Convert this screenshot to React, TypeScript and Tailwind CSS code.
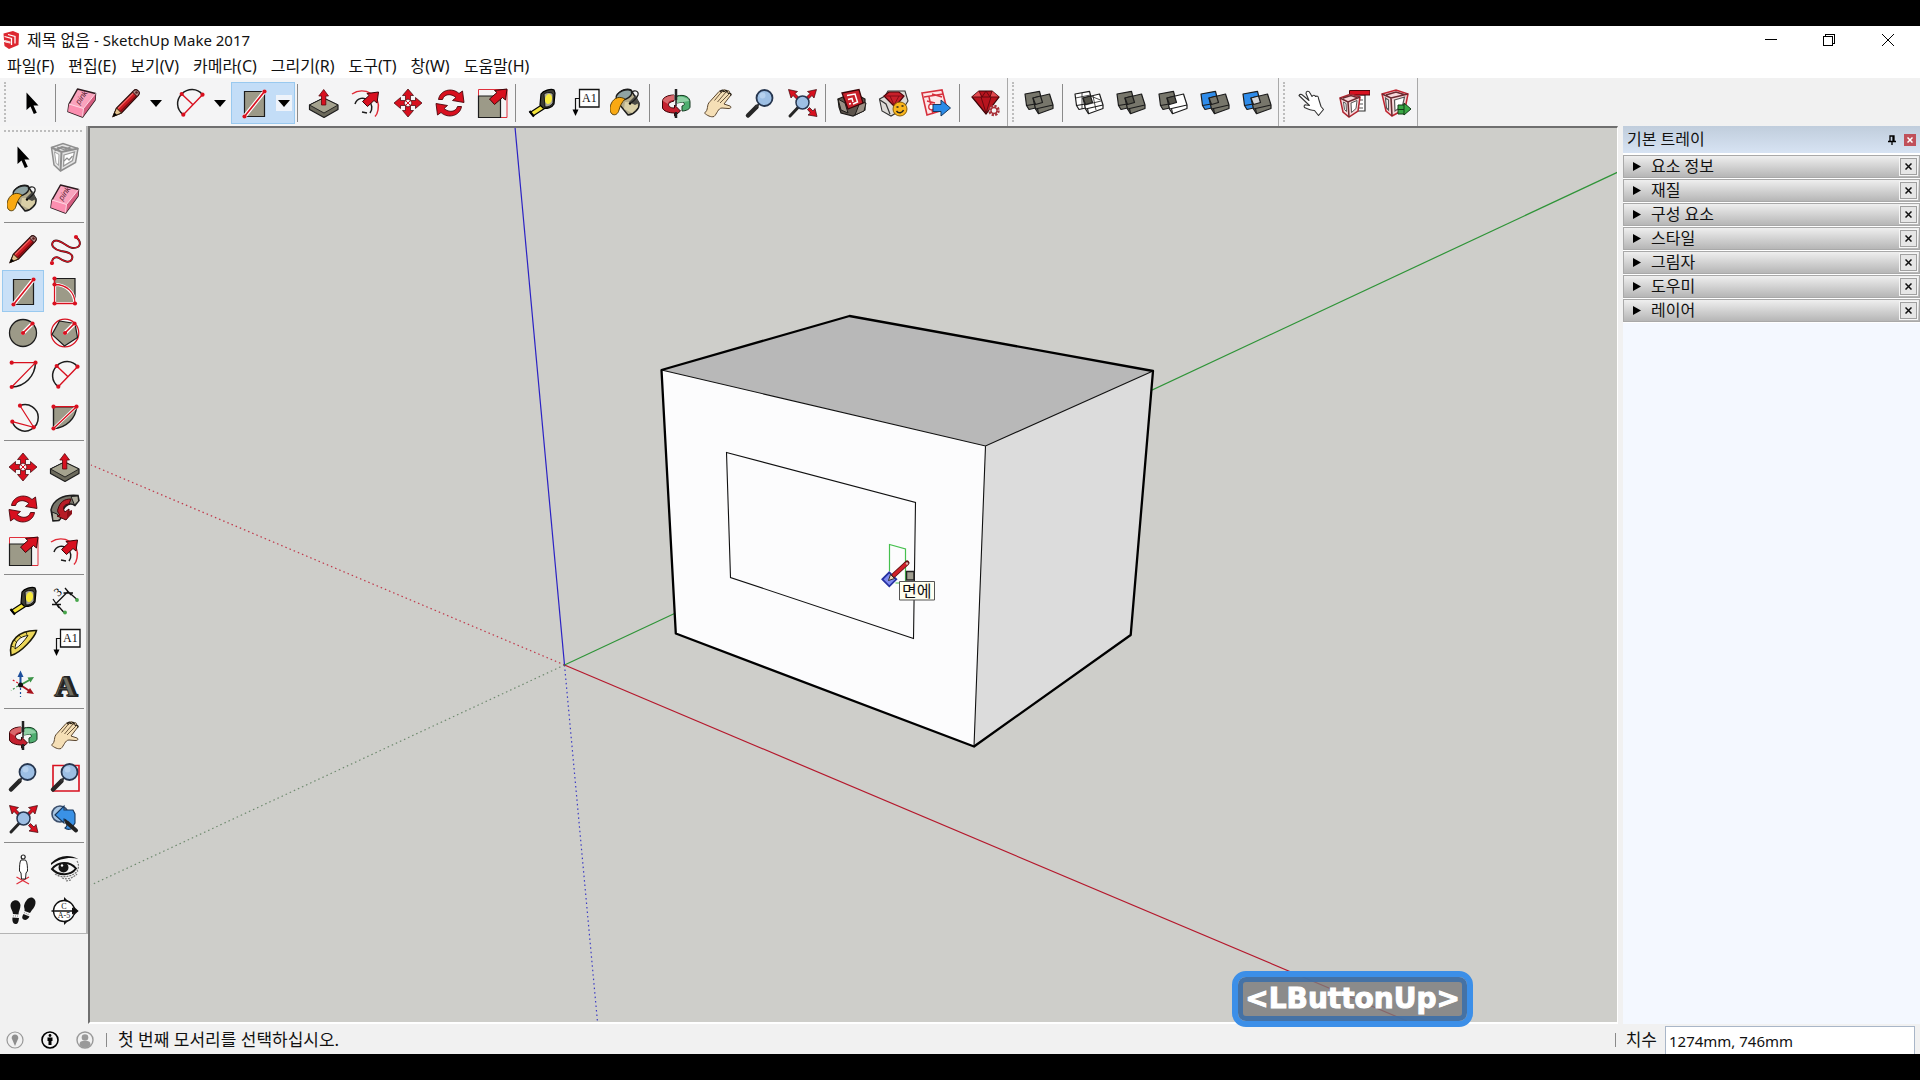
import React from "react";

type IconProps = { children: React.ReactNode };

function Svg({ children }: IconProps) {
  return (
    <svg viewBox="0 0 32 32" className="size-8 shrink-0" fill="none" aria-hidden="true">
      {children}
    </svg>
  );
}

const RED = "#d8101f";
const STONE = "#9c9a88";
const DARK = "#1c1c1c";

function Dots({ at }: { at: [number, number][] }) {
  return (
    <>
      {at.map(([x, y]) => (
        <circle key={`${x}-${y}`} cx={x} cy={y} r="2.1" fill={RED} />
      ))}
    </>
  );
}

function SelectIcon() {
  return (
    <Svg>
      <path d="M10.500 5.500V23l4-3.500 3.300 7.500 3-1.300-3.300-7.200h5z" fill="#000" />
    </Svg>
  );
}

function ComponentIcon() {
  return (
    <Svg>
      <path d="M2.500 6.500 14 2.500l15 5-2.500 14L11.500 30 5 24z" fill="#e4e4e4" stroke="#8f8f8f" strokeWidth="1.500" />
      <path d="m2.500 6.500 10 4.500L29 7.500M12.500 11l-1 19M5.500 9.500 13 6l11.500 3" stroke="#8f8f8f" strokeWidth="2" />
      <path d="m15 14 10.500-3-2 8.500L14.500 25z" fill="#fff" stroke="#9a9a9a" strokeWidth="1.300" />
      <path d="m5.500 11 4.500 2.500-.5 11L7 21.500z" fill="#fff" stroke="#a5a5a5" />
      <path d="m15 20 3-3 2 2 3.500-4M8 6l8 3 6-3.500" stroke="#8f8f8f" strokeWidth="1.200" />
    </Svg>
  );
}

function PaintIcon() {
  return (
    <Svg>
      <path d="M7 9C10 3 17 1 21 3l8 13c1 6-6 12-11 12L9 17z" fill="#b3ab8c" stroke={DARK} strokeWidth="1.500" />
      <path d="M15 15 27 16l1 4-6 6-8-4z" fill="#d9cfa6" />
      <path d="m19 15 7-7 3 8-4 2z" fill="#4a4a45" />
      <ellipse cx="14" cy="8" rx="8.500" ry="4.500" transform="rotate(-24 14 8)" fill="#8fa3a3" stroke={DARK} strokeWidth="1.500" />
      <path d="M21 6c3-4 8-2 7 2-1 4-4 5-7 8" stroke={DARK} strokeWidth="1.200" />
      <circle cx="20" cy="16.500" r="1.200" fill="#000" />
      <path d="M15 12C10 9 4 10 1 17c-2 5-1 8 1 10 3 2 6 0 7-4 1-4 3-8 6-11z" fill="#f9a913" stroke="#4b3400" strokeWidth=".9" />
    </Svg>
  );
}

function EraserIcon() {
  return (
    <Svg>
      <path d="M11.500 2 29.500 6.500 29 13 16.500 30 2 24.500 3 17z" fill="#f9a3bd" stroke="#2c1a1f" strokeWidth="1.500" strokeLinejoin="round" />
      <path d="m3 17 14.500 4.500-1 8.500L2 24.500z" fill="#fb8fb0" />
      <path d="M17.500 21.500 29.500 6.500 29 13 16.500 30z" fill="#d45d80" />
      <path d="m3 17 14.500 4.500 12-15M17.500 21.500l-1 8" stroke="#fde0e8" strokeWidth=".9" />
      <text x="13.500" y="18" transform="rotate(-56 13.500 18)" fontSize="8" fontStyle="italic" fontFamily="Liberation Sans, sans-serif" fill="#5b2336">
        pink
      </text>
    </Svg>
  );
}

function PencilIcon() {
  return (
    <Svg>
      <path d="M3 29.500 6.500 21 24 3.500c2-2 7 1 4.500 4.500L11.500 26z" fill="#c91820" stroke="#2a0c0c" strokeWidth="1.200" />
      <path d="M8 21.500 24 5.500" stroke="#f0605c" strokeWidth="1.300" />
      <path d="m10.500 24.500 17-17" stroke="#7d0c10" strokeWidth="1.500" />
      <path d="M3 29.500 6.500 21l5 5z" fill="#e2c08d" stroke="#2a1c0c" />
      <path d="m3 29.500 1.500-4 2.500 2.500z" fill="#000" />
      <path d="M24 3.500c2-2 7 1 4.500 4.500L27 9.500 22.500 5z" fill="#b48a86" stroke="#2a0c0c" />
      <circle cx="26.500" cy="5.500" r="1.300" fill="#5a1d1d" />
    </Svg>
  );
}

function FreehandIcon() {
  return (
    <Svg>
      <path d="M27 4c6 5 5 11-3 11C18 15 11 5 5 8c-5 4 1 9 7 10 7 1 13 3 11 8-2 5-9 2-13-1-3-2-6 0-7 3" stroke="#2a2020" strokeWidth="2" />
      <path d="M27 4c6 5 5 11-3 11C18 15 11 5 5 8c-5 4 1 9 7 10 7 1 13 3 11 8-2 5-9 2-13-1-3-2-6 0-7 3" stroke={RED} strokeWidth="1.200" />
      <Dots at={[[27, 4], [3, 30]]} />
    </Svg>
  );
}

function RectIcon() {
  return (
    <Svg>
      <path d="M6.500 4.500h20v25h-20z" fill={STONE} stroke={DARK} strokeWidth="1.200" />
      <path d="m6.500 29.500 20-25" stroke="#fff" strokeWidth="4" strokeLinecap="round" />
      <path d="m6.500 29.500 20-25" stroke={RED} strokeWidth="1.600" />
      <Dots at={[[6.5, 29.5], [26.5, 4.5]]} />
    </Svg>
  );
}

function RotatedRectIcon() {
  return (
    <Svg>
      <path d="M5.500 3.500h20.500v25H5.500z" fill={STONE} stroke={DARK} strokeWidth="1.200" />
      <path d="M5.500 9.500c12 0 20 8 20.500 19H5.500z" stroke="#fff" strokeWidth="3.200" />
      <path d="M5.500 3.500v25H26c0-11-8-19-20.500-19" stroke={RED} strokeWidth="1.300" />
      <Dots at={[[5.5, 3.5], [5.5, 9.5], [5.5, 28.5], [26, 28.5]]} />
    </Svg>
  );
}

function CircleIcon() {
  return (
    <Svg>
      <circle cx="16" cy="16" r="13.500" fill={STONE} stroke={DARK} strokeWidth="1.300" />
      <path d="M16 16 25.500 6.500" stroke="#fff" strokeWidth="4" strokeLinecap="round" />
      <path d="M16 16 25.500 6.500" stroke={RED} strokeWidth="1.600" />
      <Dots at={[[16, 16], [25.5, 6.5]]} />
    </Svg>
  );
}

function PolygonIcon() {
  return (
    <Svg>
      <circle cx="16" cy="16" r="13.800" stroke={RED} strokeWidth="1.200" />
      <path d="M10.500 4 26 6.500 28.500 20.500 15.500 29 3 17.500z" fill={STONE} stroke={DARK} strokeWidth="1.200" />
      <path d="M16 16 25.500 6.500" stroke="#fff" strokeWidth="4" strokeLinecap="round" />
      <path d="M16 16 25.500 6.500" stroke={RED} strokeWidth="1.600" />
      <Dots at={[[16, 16], [25.5, 6.5]]} />
    </Svg>
  );
}

function ArcIcon() {
  return (
    <Svg>
      <path d="M28.500 3.700C28 17 18 27.500 4.700 28" stroke={DARK} strokeWidth="1.500" />
      <path d="M4.700 3.700h23.800L4.700 28" stroke={RED} strokeWidth="1.200" />
      <Dots at={[[4.7, 3.7], [28.5, 3.7], [4.7, 28]]} />
    </Svg>
  );
}

function TwoPointArcIcon() {
  return (
    <Svg>
      <path d="M28.500 7.700C23 1 14 1 7.700 7 2 13 2 22 9.300 27.700" stroke={DARK} strokeWidth="1.500" />
      <path d="M28.500 7.700 9.300 27.700M7.700 7 19 17.700" stroke={RED} strokeWidth="1.400" />
      <Dots at={[[7.7, 7], [28.5, 7.7], [9.3, 27.7]]} />
    </Svg>
  );
}

function ThreePointArcIcon() {
  return (
    <Svg>
      <path d="M13 4.700C22 1 31 8 31.200 16 31.500 27 20 33 12 28.500c-3-1.500-5.500-4.500-6.700-7.800" stroke={DARK} strokeWidth="1.500" />
      <path d="m13 4.700 13.700 21.600-21.400-5.600" stroke={RED} strokeWidth="1.200" />
      <Dots at={[[13, 4.7], [5.3, 20.7], [26.7, 26.3]]} />
    </Svg>
  );
}

function PieIcon() {
  return (
    <Svg>
      <path d="M4.500 5.700h23C27 17 17 27.500 4.500 27.500z" fill={STONE} stroke={DARK} strokeWidth="1.400" />
      <path d="M4.500 27.500 27.500 5.700" stroke="#fff" strokeWidth="3" />
      <path d="M27.500 5.700h-23M4.500 27.500 27.500 5.700" stroke={RED} strokeWidth="1.300" />
      <Dots at={[[4.5, 5.7], [27.5, 5.7], [4.5, 27.5]]} />
    </Svg>
  );
}

function MoveIcon() {
  return (
    <Svg>
      {[0, 90, 180, 270].map((a) => (
        <path key={a} transform={`rotate(${a} 16 16)`} d="m16 2 5.500 6.500h-3v5l-2.500-1.500-2.500 1.500v-5h-3z" fill={RED} stroke="#3a0508" strokeWidth=".7" />
      ))}
      <path d="m13.500 13.500 5 5m0-5-5 5" stroke={RED} strokeWidth="1" />
    </Svg>
  );
}

function RotateIcon() {
  return (
    <Svg>
      {[0, 180].map((a) => (
        <path key={a} transform={`rotate(${a} 16 16)`} d="M4.500 12.500C6 3 18 0 25 6.500L28.500 4 30 15.500l-11.500-2 3.500-3C17 6 10 7 8.500 12.500z" fill={RED} stroke="#4a060b" strokeWidth=".9" />
      ))}
    </Svg>
  );
}

function PushPullIcon() {
  return (
    <Svg>
      <path d="m1.500 18 14-7 14.500 7v4.500L16 30.500 1.500 22.500z" fill="#6c6a5c" stroke={DARK} strokeWidth="1.200" strokeLinejoin="round" />
      <path d="m1.500 18 14-7 14.500 7-14 8z" fill="#a5a38f" stroke={DARK} strokeWidth=".9" />
      <path d="M15.700 2.500 20.500 9h-2.700v9h-4.300V9h-2.700z" fill={RED} stroke="#5a060b" strokeWidth=".8" />
    </Svg>
  );
}

function FollowMeIcon() {
  return (
    <Svg>
      <path d="M2 17C4 7 14 1 29 2.500l1 5-4 5c-5-3-9-1-12 4 0 4-1 8-4 11l-6 .5z" fill="#77756a" stroke={DARK} strokeWidth="1.500" />
      <path d="M22 3.500 29 3l.5 5-4 4zM3 19l5 2 4 4-3 2.500H4z" fill="#b0ae9e" stroke={DARK} />
      <path d="M9 16c2-7 6-10 13-10l-2 5c-5 0-7 4-4 8l4-3v7l-3 4-9-4 3-1c-2-2-3-4-2-6z" fill="#b81c26" stroke="#4a060b" />
      <path d="m18 19 5-2v4l-5 5z" fill="#8c1018" />
    </Svg>
  );
}

function ScaleIcon() {
  return (
    <Svg>
      <path d="M2.500 2.500H31v28H2.500z" stroke="#e0303c" strokeWidth="1" />
      <path d="M2.500 9h22v21.500h-22z" fill={STONE} stroke={DARK} strokeWidth="1.200" />
      <path d="m31 2-1.500 11-3-2.500-8 7-5-5.500L21 5.500l-2.500-2z" fill={RED} stroke="#3a0508" strokeWidth="1" />
    </Svg>
  );
}

function OffsetIcon() {
  return (
    <Svg>
      <path d="M2 7C14-1 31 8 28 23c-.5 3-1.500 5-3 6.500" stroke="#e02a36" strokeWidth="1.500" />
      <path d="M5 17c2-6 9-8 14-3 3 3 4 8 1 12M12 25l5 1" stroke={DARK} strokeWidth="1.500" />
      <path d="m28.500 5-1.500 11-3-2.500-6.500 6-5-5 6.500-6-2-2z" fill={RED} stroke="#3a0508" strokeWidth="1" />
    </Svg>
  );
}

function TapeIcon() {
  return (
    <Svg>
      <path d="M4 25.500 17 17l3 3.500L7 29z" fill="#f4e43a" stroke="#000" strokeWidth="1.200" />
      <path d="m3.500 24 4.500 5.500" stroke="#000" strokeWidth="2" />
      <path d="M15 7C17 4 25 1 28 3l1 3-1 11c-2 4-8 5-11 4l-3-3z" fill="#3c3c34" stroke="#000" strokeWidth="1.200" />
      <path d="M18 7c3-2 7-2 9 0v9c-2 3-5 4-8 4z" fill="#a9a79a" stroke="#000" strokeWidth=".8" />
      <ellipse cx="22.500" cy="12" rx="3.500" ry="5" transform="rotate(12 22.500 12)" fill="#f8ea3c" />
    </Svg>
  );
}

function DimensionIcon() {
  return (
    <Svg>
      <path d="m7 18.500 12-12M7 18.500l8 9M19 6.500l9 8M4 14l6 9m-7-3.500h9M16 3l6 7m-7.500-2H24" stroke="#111" strokeWidth="1.300" />
      <text x="7" y="12" fontSize="12" transform="rotate(-42 8 9)" fontFamily="Liberation Serif, serif" fill="#000">3</text>
      <circle cx="16" cy="27.500" r="1.900" fill="#47a64b" />
      <circle cx="28" cy="15" r="1.900" fill="#47a64b" />
    </Svg>
  );
}

function ProtractorIcon() {
  return (
    <Svg>
      <path d="M4 28.500C1 14 12 3 29.500 3.500 28 10 14 26 4 28.500z" fill="#ecd75a" stroke="#1c1a08" strokeWidth="1.500" />
      <path d="M8 22c0-8 5-12.500 13-13.500C18 13 13 19 8 22z" fill="#f4f4f4" stroke="#1c1a08" strokeWidth="1" />
      <path d="m4 19 3 1M7 13l2.500 2M12 8l2 2.500M19 5l1 3" stroke="#1c1a08" strokeWidth=".8" />
    </Svg>
  );
}

function TextIcon() {
  return (
    <Svg>
      <path d="M11.500 2.500h19.500V20H11.500z" fill="#fff" stroke="#111" strokeWidth="1.300" />
      <path d="M11 11.500H7.500V24" stroke="#111" strokeWidth="1.200" />
      <path d="M4.500 22.500h6l-3 6.500z" fill="#000" />
      <text x="14" y="15" fontSize="12" fontFamily="Liberation Serif, serif" fill="#111">A1</text>
    </Svg>
  );
}

function AxesIcon() {
  return (
    <Svg>
      <path d="M13.500 16V7" stroke="#1d4f9c" strokeWidth="2" />
      <path d="m13.500 1.500 3 6.500h-6z" fill="#1d4f9c" />
      <path d="m13.500 16 9-5" stroke="#3c9448" strokeWidth="2" />
      <path d="m27 8-3.500 5.500-3-5z" fill="#3c9448" />
      <path d="m13.500 16 9 6" stroke="#a8121c" strokeWidth="2" />
      <path d="m27 25-7.500-1 3.500-5z" fill="#a8121c" />
      <path d="M13.500 19v9" stroke="#1d4f9c" strokeWidth="1.200" strokeDasharray="2 2" />
      <path d="m11 17-7 4.500" stroke="#3c9448" strokeWidth="1.200" strokeDasharray="2 2" />
      <path d="m11 14-7-4" stroke="#d8101f" strokeWidth="1.200" strokeDasharray="2 2" />
      <circle cx="13.500" cy="16" r="2.500" fill="#111" />
    </Svg>
  );
}

function Text3dIcon() {
  return (
    <Svg>
      <g fontFamily="Liberation Serif, serif" fontWeight="700" fontSize="30">
        <text x="7" y="27" fill="#222" stroke="#222" strokeWidth="2">A</text>
        <text x="5" y="27" fill="#6f6e62" stroke="#222" strokeWidth=".8">A</text>
      </g>
    </Svg>
  );
}

function OrbitIcon() {
  return (
    <Svg>
      <path d="M17 9c7-2 13 1 13 6v5c0 2-4 4-8 4v-5c3-1 3-2 1-4l-6 1z" fill="#4fae70" stroke="#173a22" strokeWidth="1" />
      <path d="M17 10c6-1 11 1 12 4l-6 1-6 1z" fill="#8fd0a4" />
      <path d="M14 8C7 8 2 11 2.500 15v6c1 3 6 5 12 5v3l6-5-6-6v3c-5 0-6-2-6-4 0-1 2-2 5.500-3z" fill="#c4202e" stroke="#3a0508" strokeWidth="1" />
      <path d="M3 14c0-3 5-5 11-6v5c-4 0-6 2-6 4z" fill="#d9686c" />
      <path d="M16 2v11M16 25v6" stroke="#222" strokeWidth="2.500" />
      <path d="M16 13v6" stroke="#222" strokeWidth="1.500" />
    </Svg>
  );
}

function PanIcon() {
  return (
    <Svg>
      <path d="M2.500 26C7 23 4 18 8 14.500L17 4.500c2-2 3 0 2 1.500l2-2.500c2-2 4 0 2.500 2L25 4c2-1 3 .5 2 2l-.5 1c2-1.500 3 0 2 1.500L22 17l6 2c2 1 .5 3-2 2.500l-6-.5c-4 0-5 6-8 8.500-3 1-7-1-9.500-3.500z" fill="#f5dfb6" stroke="#5a4630" strokeWidth="1" />
      <path d="m12.500 13.500 7-8.500M15.500 15 24 5M18 16l8.500-8.500" stroke="#5a4630" strokeWidth=".9" />
      <path d="M18 5c2-3 4-2 3 0m1 0c2-3 4-1 3 1m1 1c2-2 4 0 2.500 2" stroke="#2a2218" strokeWidth="1.200" />
    </Svg>
  );
}

function Lens() {
  return (
    <>
      <path d="M4 28.500 12.500 20" stroke="#262626" strokeWidth="4.500" strokeLinecap="round" />
      <path d="m11.500 20.500 4-4" stroke="#333" strokeWidth="2" />
      <circle cx="20.500" cy="11" r="8" fill="#9dbfe4" stroke="#26364f" strokeWidth="1.800" />
      <circle cx="18.500" cy="8.500" r="3" fill="#b6d1ee" />
    </>
  );
}

function ZoomIcon() {
  return (
    <Svg>
      <Lens />
    </Svg>
  );
}

function ZoomWindowIcon() {
  return (
    <Svg>
      <path d="M4 4.500h26V30H4z" stroke={RED} strokeWidth="1.600" />
      <Lens />
    </Svg>
  );
}

function ZoomExtentsIcon() {
  return (
    <Svg>
      <path d="m4 29 8-8.500" stroke="#262626" strokeWidth="3" strokeLinecap="round" />
      <path d="m2.500 2.500 9 2-2.500 2 4 4-2 2-4-4-2 2.500zM30.500 2.500l-9 2 2.500 2-4 4 2 2 4-4 2 2.500zM31 29.500l-9-1.500 2.500-2-3-3.500 2-2 3.500 3.500 2-2.500z" fill={RED} stroke="#3a0508" strokeWidth=".7" />
      <circle cx="16.500" cy="15.500" r="6.500" fill="#9dbfe4" stroke="#26364f" strokeWidth="1.500" />
    </Svg>
  );
}

function ZoomPreviousIcon() {
  return (
    <Svg>
      <circle cx="11" cy="11" r="8" fill="#a9c6e2" stroke="#3c4f6c" strokeWidth="1.600" />
      <path d="m6 12 9-9v4h9l2 4v9l-4 6c-4 1-5 0-6-1 3-2 3-8-1-9v4z" fill="#3a92e6" stroke="#17375c" strokeWidth="1.100" />
      <path d="m18 19.500 9 8" stroke="#222" strokeWidth="4" strokeLinecap="round" />
      <path d="m16 17 3 3" stroke="#222" strokeWidth="2" />
    </Svg>
  );
}

function PositionCameraIcon() {
  return (
    <Svg>
      <path d="M9.500 31 22 24m-12.500 0L22 31" stroke="#e0303c" strokeWidth="1.300" />
      <circle cx="16.200" cy="4" r="2" fill="#fff" stroke="#222" strokeWidth="1.200" />
      <path d="M14 7h4.500c2 2 2 8 2 11l-1.500 2-.5 6h-4l-.5-6-1.500-2c0-4 0-9 1.500-11z" fill="#fff" stroke="#222" strokeWidth="1" />
    </Svg>
  );
}

function LookAroundIcon() {
  return (
    <Svg>
      <path d="M2 10C10 2 20 1 29.500 6 21 4 11 5 2 12z" fill="#111" />
      <path d="M3 16c6-8 18-8 24-.5-5 7-17 8-24 .5z" fill="#f4f4f4" stroke="#111" strokeWidth="2" />
      <circle cx="14.500" cy="14.500" r="5" fill="#151515" />
      <circle cx="13" cy="12.500" r="1.200" fill="#fff" />
      <path d="M6 21c6 4 15 4 23-3M13 25c5 2 11 0 15-4M28 8c2 3 2 7 0 10M17 28l5-1" stroke="#777" strokeWidth="1.200" strokeDasharray="2 1" />
    </Svg>
  );
}

function WalkIcon() {
  return (
    <Svg>
      <path d="M3.500 11c0-7 9-8 10-1 0 4-2 6-2 9.500L6 19C6 16 3.500 14 3.500 11zM5.500 22.500l6.500.5c-.5 4-1 6-3.500 6S5 26 5.500 22.500z" fill="#151515" />
      <path d="M17 11c1-5 5-10 9-8 4 2 3 8-1 12l-2 3-5.500-2C18 14 17 13 17 11zM16.500 19l6 2.500c-1.500 3-4 4-6 3s-1.500-3 0-5.500z" fill="#151515" />
      <path d="m6 20.800 5.500.4M17 17.500l5.500 2.500" stroke="#999" strokeWidth="1.300" strokeDasharray="1 1" />
    </Svg>
  );
}

function SectionIcon() {
  return (
    <Svg>
      <path d="m15 2 14.500 14L15 30z" fill="#151515" />
      <circle cx="15" cy="16" r="10.500" fill="#fff" stroke="#111" strokeWidth="1.300" />
      <path d="M2.500 16H25" stroke="#111" strokeWidth="1.500" />
      <path d="m23 12.500 6.500 3.500-6.500 3.500z" fill="#111" />
      <text x="15" y="14" textAnchor="middle" fontSize="8" fontFamily="Liberation Serif, serif" fill="#111">C</text>
      <text x="15" y="23" textAnchor="middle" fontSize="8" fontFamily="Liberation Serif, serif" fill="#111">A-5</text>
    </Svg>
  );
}

function WarehouseIcon() {
  return (
    <Svg>
      <path d="m2 12 5-2 3 4 15-4 4 2v11l-12 6-12-3-2-6z" fill="#5c544c" stroke="#1c1a18" strokeWidth="1.200" />
      <path d="m2 12 7 4 3 10-7-3zM24 15l6 1-2 8-9 4z" fill="#9a9186" stroke="#1c1a18" />
      <path d="m6 6 17-3.500L27 16l-15 6z" fill="#c8202a" stroke="#3a0508" strokeWidth="1.300" />
      <path d="m11 8.500 8-1.500 2.500 8L17 17M12 12.500l4-1 1 3.500M13 17l2-.5" stroke="#fff" strokeWidth="1.500" />
    </Svg>
  );
}

function ExtensionWarehouseIcon() {
  return (
    <Svg>
      <path d="M1.500 12 7 9l3-5h17l3 10-5 8-12 7-9-5z" fill="#dddad6" stroke="#333" strokeWidth="1.100" />
      <path d="m2 13 6 4 4 10" stroke="#333" strokeWidth="1.200" />
      <path d="m6 9 5-4h10l5 4-9 11z" fill="#c8202a" stroke="#4a060b" strokeWidth="1.200" />
      <path d="M6 9h20M12 9l4 9 5-9" stroke="#7c0c14" strokeWidth=".9" />
      <circle cx="22" cy="22" r="7" fill="#f9b51c" stroke="#7a5200" strokeWidth=".9" />
      <path d="M18.500 20h2m3-1h2M18.500 24c2 3 6 2 7-1" stroke="#222" strokeWidth="1.400" />
    </Svg>
  );
}

function LayoutIcon() {
  return (
    <Svg>
      <path d="m2 6 20-3 5 19-20 6z" fill="#fde7e8" stroke="#d6303c" strokeWidth="1.600" />
      <path d="m4 10 19-3M9 10l4 17M7 14l8 2M12 7l10 3" stroke="#d6303c" strokeWidth="1.500" />
      <circle cx="11.500" cy="20" r="2.800" fill="#fff" stroke="#d6303c" strokeWidth="1.300" />
      <path d="M13 17.500h8V13l9.500 8-9.500 8v-4.500h-8z" fill="#2a8be8" stroke="#17375c" strokeWidth="1" />
    </Svg>
  );
}

function ExtensionManagerIcon() {
  return (
    <Svg>
      <path d="m2 10 7-6h13l7 6-13 17z" fill="#b8141e" stroke="#3a0508" strokeWidth="1.200" />
      <path d="m2 10 7-6 2 6zM22 4l7 6h-9z" fill="#e24a50" />
      <path d="M2 10h27M11 10l5 16 5-16M9 4l3 6 4-6 4 6 2-6" stroke="#5c080f" strokeWidth=".9" />
      <circle cx="24" cy="23.500" r="4.500" fill="#f4f4f4" stroke="#a83038" strokeWidth="2.500" strokeDasharray="2.200 1.300" />
      <circle cx="24" cy="23.500" r="3" stroke="#a83038" strokeWidth="1.300" />
    </Svg>
  );
}

type SolidProps = { a: string; b: string; mid: string; edges?: boolean };

function SolidIcon({ a, b, mid, edges }: SolidProps) {
  return (
    <Svg>
      <g stroke={DARK} strokeWidth="1.200" strokeLinejoin="round">
        <path d="m2 7 14.500-2.700L19.500 16 17 20 6 22.500 3.500 18.500z" fill={a} />
        <path d="m3.500 18.500 9-1.500" />
        <path d="m10 11 16.500-4L30 18v3.500l-14.500 5.200L12.500 22z" fill={b} />
        <path d="m12.500 22 17.500-4M14.500 21.500l1 5" />
        <path d="m10 11 7.500-2 2 6.500-7 2z" fill={mid} />
        {edges && <path d="m2.500 11 15-3M9 6v16M20 9l3 14M12 18l16-4M17.500 9l10 4" strokeWidth=".8" />}
      </g>
    </Svg>
  );
}

function PointHandIcon() {
  return (
    <Svg>
      <path d="M3 8.500c1-2 3-1 4 0l6 5-3-7c0-3 3-3 4-.5l2 3.500c1-2 3-1.500 3.500 0 2-1 3 0 3 2l2.500 8 2.500 3-5 6-4-5c-4 0-8-2-10-3-1-2 0-3 2-2.500l3 .5z" fill="#fff" stroke="#333" strokeWidth="1.100" strokeLinejoin="round" />
    </Svg>
  );
}

function RedBox() {
  return (
    <>
      <path d="m2 11 11-4 9 3-2 14-9 6-6-5z" fill="#f6d9db" stroke="#b02530" strokeWidth="1.500" />
      <path d="m2 11 8 4 12-5M10 15l1 15M5 11l8-2.500 6 2" stroke="#6b2a30" strokeWidth="1.500" />
      <path d="m13 16 6-2.500-1 8-4.500 4zM5.500 15l2.500 1.500.5 8-2-2z" fill="#fff" stroke="#555" />
    </>
  );
}

function ComponentMenuIcon() {
  return (
    <Svg>
      <path d="M16 8h11v16H16z" fill="#fff" stroke="#333" strokeWidth="1.200" />
      <path d="M20 13h5m-5 4h5m-5 4h5" stroke="#555" strokeWidth="1.200" />
      <path d="M11.500 3.500H32V8H11.500z" fill="#d8101f" stroke="#4a060b" />
      <RedBox />
    </Svg>
  );
}

function ComponentGoIcon() {
  return (
    <Svg>
      <path d="m2 7 14-4 12 4-3 15-13 7-6-5z" fill="#f6d9db" stroke="#c02530" strokeWidth="1.500" />
      <path d="m2 7 9 4 17-4M11 11l1 18M6 8l10-3 8 2.500" stroke="#6b2a30" strokeWidth="1.600" />
      <path d="m14.500 13 10-3-2 9-7.500 5zM5.500 11l3 2v10l-2-2z" fill="#fff" stroke="#555" strokeWidth="1.200" />
      <path d="M18 18h6v-2l7 6-7 6v-1h-6z" fill="#3aa845" stroke="#143c18" strokeWidth="1" />
      <path d="M18 22.500h6M24 17v11" stroke="#143c18" />
    </Svg>
  );
}

function LogoIcon() {
  return (
    <svg viewBox="0 0 18 20" className="h-5 w-[18px]" aria-hidden="true">
      <path d="M.5 3.500 10 1l6 2.500L15.500 15 6 19l-4.500-3L1 12l6 1.500L1 10z" fill="#dd2730" />
      <path d="m1.500 6.500 7 2V15M5 4.500l7 2v7" fill="none" stroke="#fff" strokeWidth="1.300" />
      <path d="m2 10 5.500 1.500v2L2 12z" fill="#fbdcdd" />
    </svg>
  );
}

function Caret() {
  return (
    <svg viewBox="0 0 12 7" className="h-[7px] w-3 shrink-0" aria-hidden="true">
      <path d="M0 0h12L6 7z" fill="#000" />
    </svg>
  );
}

type Tool = { label: string; icon: React.ReactNode; active?: boolean };

function ToolButton({ label, icon, active }: Tool) {
  return (
    <button
      aria-label={label}
      className={
        active
          ? "flex h-[42px] w-[42px] shrink-0 items-center justify-center border border-[#99c9ef] bg-[#c9e0f7]"
          : "flex h-[42px] w-[42px] shrink-0 items-center justify-center"
      }
    >
      {icon}
    </button>
  );
}

function SplitTool({ label, icon, active }: Tool) {
  return (
    <div className={active ? "flex h-[42px] w-16 bg-[#c3ddf7] outline outline-1 -outline-offset-1 outline-[#99c9ef]" : "flex h-[42px] w-16"}>
      <button aria-label={label} className="flex w-[45px] items-center justify-center">
        {icon}
      </button>
      <button aria-label={`${label} 메뉴`} className="flex w-4 items-center justify-center self-center">
        <span className={active ? "flex h-4 w-4 shrink-0 items-center justify-center bg-[#eef3fa]" : "flex"}>
          <Caret />
        </span>
      </button>
    </div>
  );
}

function VSep() {
  return (
    <div className="flex w-2 shrink-0 pl-0.5">
      <div className="h-[38px] w-px bg-[#8a8a8a]" />
    </div>
  );
}

function Grip() {
  return <div className="h-10 w-0 border-l-2 border-dotted border-[#bdbdbd]" />;
}

const viewTools: Tool[][] = [
  [
    { label: "밀기/끌기", icon: <PushPullIcon /> },
    { label: "오프셋", icon: <OffsetIcon /> },
    { label: "이동", icon: <MoveIcon /> },
    { label: "회전", icon: <RotateIcon /> },
    { label: "배율", icon: <ScaleIcon /> },
  ],
  [
    { label: "줄자", icon: <TapeIcon /> },
    { label: "텍스트", icon: <TextIcon /> },
    { label: "페인트통", icon: <PaintIcon /> },
  ],
  [
    { label: "궤도", icon: <OrbitIcon /> },
    { label: "이동 보기", icon: <PanIcon /> },
    { label: "확대/축소", icon: <ZoomIcon /> },
    { label: "범위 확대", icon: <ZoomExtentsIcon /> },
  ],
  [
    { label: "3D Warehouse", icon: <WarehouseIcon /> },
    { label: "Extension Warehouse", icon: <ExtensionWarehouseIcon /> },
    { label: "LayOut", icon: <LayoutIcon /> },
  ],
  [{ label: "확장 관리자", icon: <ExtensionManagerIcon /> }],
];

const GREY = "#77766b";
const BLUE = "#2f8cea";

function TopToolbar() {
  return (
    <div className="flex h-12 shrink-0 bg-[#f1f1f1]">
      <div className="flex h-full items-center border-r border-[#a9a9a9] bg-[#f4f4f5] pl-1">
        <Grip />
        <div className="flex items-center pt-0.5 pl-[5px]">
          <ToolButton label="선택" icon={<SelectIcon />} />
          <VSep />
          <ToolButton label="지우개" icon={<EraserIcon />} />
          <SplitTool label="선" icon={<PencilIcon />} />
          <SplitTool label="호" icon={<TwoPointArcIcon />} />
          <SplitTool label="직사각형" icon={<RectIcon />} active />
          {viewTools.map((group, i) => (
            <React.Fragment key={i}>
              <VSep />
              {group.map((t) => (
                <ToolButton key={t.label} {...t} />
              ))}
            </React.Fragment>
          ))}
        </div>
      </div>
      <div className="flex h-full items-center border-r border-[#a9a9a9] bg-[#f4f4f5] pl-1">
        <Grip />
        <div className="flex items-center pt-0.5 pl-1">
          <ToolButton label="외부 쉘" icon={<SolidIcon a={GREY} b={GREY} mid={GREY} />} />
          <VSep />
          <ToolButton label="교차" icon={<SolidIcon a="#fff" b="#fff" mid="#55544b" edges />} />
          <ToolButton label="결합" icon={<SolidIcon a={GREY} b={GREY} mid="#5a594f" />} />
          <ToolButton label="빼기" icon={<SolidIcon a={GREY} b="#fff" mid="#55544b" />} />
          <ToolButton label="자르기" icon={<SolidIcon a={BLUE} b={GREY} mid={GREY} />} />
          <ToolButton label="분할" icon={<SolidIcon a={BLUE} b={GREY} mid="#d5d5d5" />} />
        </div>
      </div>
      <div className="flex h-full items-center border-r border-[#a9a9a9] bg-[#f4f4f5] pl-1">
        <Grip />
        <div className="flex items-center pt-0.5 pl-1.5">
          <ToolButton label="상호 작용" icon={<PointHandIcon />} />
          <ToolButton label="구성 요소 옵션" icon={<ComponentMenuIcon />} />
          <ToolButton label="구성 요소 특성" icon={<ComponentGoIcon />} />
        </div>
      </div>
    </div>
  );
}

const toolSet: Tool[][] = [
  [
    { label: "선택", icon: <SelectIcon /> },
    { label: "구성 요소 만들기", icon: <ComponentIcon /> },
    { label: "페인트통", icon: <PaintIcon /> },
    { label: "지우개", icon: <EraserIcon /> },
  ],
  [
    { label: "선", icon: <PencilIcon /> },
    { label: "자유형", icon: <FreehandIcon /> },
    { label: "직사각형", icon: <RectIcon />, active: true },
    { label: "회전된 직사각형", icon: <RotatedRectIcon /> },
    { label: "원", icon: <CircleIcon /> },
    { label: "다각형", icon: <PolygonIcon /> },
    { label: "호", icon: <ArcIcon /> },
    { label: "2점 호", icon: <TwoPointArcIcon /> },
    { label: "3점 호", icon: <ThreePointArcIcon /> },
    { label: "파이", icon: <PieIcon /> },
  ],
  [
    { label: "이동", icon: <MoveIcon /> },
    { label: "밀기/끌기", icon: <PushPullIcon /> },
    { label: "회전", icon: <RotateIcon /> },
    { label: "따라가기", icon: <FollowMeIcon /> },
    { label: "배율", icon: <ScaleIcon /> },
    { label: "오프셋", icon: <OffsetIcon /> },
  ],
  [
    { label: "줄자", icon: <TapeIcon /> },
    { label: "치수", icon: <DimensionIcon /> },
    { label: "각도기", icon: <ProtractorIcon /> },
    { label: "텍스트", icon: <TextIcon /> },
    { label: "축", icon: <AxesIcon /> },
    { label: "3D 텍스트", icon: <Text3dIcon /> },
  ],
  [
    { label: "궤도", icon: <OrbitIcon /> },
    { label: "이동 보기", icon: <PanIcon /> },
    { label: "확대/축소", icon: <ZoomIcon /> },
    { label: "창 확대/축소", icon: <ZoomWindowIcon /> },
    { label: "범위 확대", icon: <ZoomExtentsIcon /> },
    { label: "이전", icon: <ZoomPreviousIcon /> },
  ],
  [
    { label: "카메라 배치", icon: <PositionCameraIcon /> },
    { label: "둘러보기", icon: <LookAroundIcon /> },
    { label: "걷기", icon: <WalkIcon /> },
    { label: "단면", icon: <SectionIcon /> },
  ],
];

function LeftToolbar() {
  return (
    <div className="flex w-[88px] shrink-0 flex-col items-start bg-[#f1f1f1]">
      <div className="w-[88px] border-r-2 border-b border-[#b4b4b4] bg-[#f5f5f5] pt-1">
        <div className="mr-1 ml-1 h-0 border-t-2 border-dotted border-[#bdbdbd]" />
        <div className="flex flex-col pt-1 pb-px pl-0.5">
          {toolSet.map((group, i) => (
            <React.Fragment key={i}>
              {i > 0 && (
                <div className="h-2 pt-0.5">
                  <div className="mr-0.5 ml-0.5 h-px bg-[#8a8a8a]" />
                </div>
              )}
              <div className="grid grid-cols-[42px_42px]">
                {group.map((t) => (
                  <ToolButton key={t.label} {...t} />
                ))}
              </div>
            </React.Fragment>
          ))}
        </div>
      </div>
    </div>
  );
}

function Model() {
  return (
    <svg viewBox="90 128 1527 894" preserveAspectRatio="xMidYMid slice" className="absolute inset-0 h-full w-full" role="img" aria-label="3D 모델">
      <g fill="none" strokeWidth="1.200">
        <path d="M564.500 665 91 465" stroke="#c03a4c" strokeDasharray="1.500 3" />
        <path d="M564.500 665 91 885" stroke="#6f8a6f" strokeDasharray="1.500 3" />
        <path d="m564.500 665 33 357" stroke="#3c3cc4" strokeDasharray="1.500 3" />
        <path d="M564.500 665 515 127" stroke="#2b22c4" />
        <path d="M564.500 665 1407 1021" stroke="#b5182c" />
        <path d="M564.500 665 1618 172" stroke="#2f9438" />
      </g>
      <path d="M661.500 370 849.500 316 1153 371 985.500 446z" fill="#b8b8b8" />
      <path d="M661.500 370 985.500 446 974 746.500 675.800 633.500z" fill="#fcfcfd" />
      <path d="M985.500 446 1153 371 1130.700 635 974 746.500z" fill="#dcdcdc" />
      <path d="M661.500 370 985.500 446 1153 371M985.500 446 974 746.500M726.500 452.500l189 50-2 136-183-61z" fill="none" stroke="#111" strokeWidth="1.100" />
      <path d="M661.500 370 849.500 316 1153 371 1130.700 635 974 746.500 675.800 633.500z" fill="none" stroke="#000" strokeWidth="2.300" strokeLinejoin="round" />
      <path d="M889.500 571v-26.500l16 4.500v34l-10 0" fill="none" stroke="#45c04e" strokeWidth="1.200" />
      <path d="M906.500 571.500h7.500v8.500h-7.500z" fill="#a09e90" stroke="#222" strokeWidth="1.500" />
      <path d="m889.300 572.300 7 7-7 7-7-7z" fill="#7f8aee" stroke="#2530a0" strokeWidth="1.800" />
      <path d="m894 575 13-12" stroke="#5c1212" strokeWidth="5" strokeLinecap="round" />
      <path d="m894 575 12-11" stroke="#d0202a" strokeWidth="3.200" strokeLinecap="round" />
      <path d="m888.500 580.500 2-6 4 4z" fill="#ecd6bb" stroke="#222" strokeWidth=".9" />
      <circle cx="907" cy="563.500" r="1.200" fill="#e0b5b0" />
      <path d="M899.500 581.500h35v18.500h-35z" fill="#fffff0" stroke="#555" strokeWidth="1" />
      <text x="902" y="597" fontSize="16" fontFamily="'Noto Sans CJK KR', sans-serif" fill="#111">면에</text>
    </svg>
  );
}

function Viewport() {
  return (
    <main className="relative min-w-0 flex-1 border-t-2 border-r border-b-2 border-l-2 border-t-[#6f6f6f] border-r-white border-b-white border-l-[#6f6f6f] bg-[#cececa]">
      <Model />
      <div className="absolute right-36 -bottom-[5px] z-10 rounded-[14px] border-[6px] border-[#3c8fe8]">
        <div
          className="flex h-11 items-center rounded-lg border-[5px] border-[#3e70a8]/90 bg-[#7a7a7a]/80 px-0.5 text-[28px] leading-8 font-bold text-white [-webkit-text-stroke:1px_white]"
          style={{ fontFamily: "'DejaVu Sans', sans-serif" }}
        >
          &lt;LButtonUp&gt;
        </div>
      </div>
    </main>
  );
}

const sections = ["요소 정보", "재질", "구성 요소", "스타일", "그림자", "도우미", "레이어"];

function Tray() {
  return (
    <aside className="ml-[5px] flex w-[297px] shrink-0 flex-col bg-[#f4f8ff] text-[16px]">
      <div className="flex h-[27px] items-center bg-gradient-to-b from-[#c0cddc] to-[#d7e3f3] pr-1 pl-1">
        <h2 className="flex-1 pb-0.5">기본 트레이</h2>
        <button aria-label="자동 숨기기" className="mr-2">
          <svg viewBox="0 0 8 10" className="h-2.5 w-2" fill="none" stroke="#000" strokeWidth="1.300">
            <path d="M2 6V1h4v5M0 6.500h8M4 6.500V10M5 1v5" />
          </svg>
        </button>
        <button aria-label="트레이 닫기" className="flex size-3 items-center justify-center bg-[#c0505a]">
          <svg viewBox="0 0 6 6" className="size-1.5" stroke="#fff" strokeWidth="1.500">
            <path d="m.5.500 5 5m0-5-5 5" />
          </svg>
        </button>
      </div>
      <div className="flex flex-col gap-px border-b border-white bg-white pt-0.5">
        {sections.map((s) => (
          <div key={s} className="flex h-[23px] items-center border border-[#a9a9a9] bg-gradient-to-b from-[#efefef] to-[#b6b6b6] pr-0.5 pl-[9px]">
            <button className="flex h-full flex-1 items-center gap-2.5 text-left">
              <svg viewBox="0 0 8 9" className="h-[9px] w-2" aria-hidden="true">
                <path d="M0 0v9l8-4.500z" fill="#000" />
              </svg>
              <span className="pb-0.5">{s}</span>
            </button>
            <button aria-label={`${s} 닫기`} className="flex size-[17px] items-center justify-center border border-[#a0a0a0] bg-[#e6e6e6] outline outline-1 outline-[#f6f6f6]">
              <svg viewBox="0 0 7 7" className="size-[7px]" stroke="#111" strokeWidth="1.500">
                <path d="m.5.500 6 6m0-6-6 6" />
              </svg>
            </button>
          </div>
        ))}
      </div>
    </aside>
  );
}

const menus = ["파일(F)", "편집(E)", "보기(V)", "카메라(C)", "그리기(R)", "도구(T)", "창(W)", "도움말(H)"];

function TitleBar() {
  return (
    <header className="shrink-0 bg-white">
      <div className="flex h-7 items-center pl-[3px]">
        <LogoIcon />
        <h1 className="flex-1 pl-1.5 text-[15px]">
          <span className="text-[16px]">제목 없음</span> - SketchUp Make 2017
        </h1>
        <div className="flex">
          <button aria-label="최소화" className="flex h-7 w-[58px] items-center justify-center">
            <svg viewBox="0 0 12 12" className="size-3" stroke="#000" shapeRendering="crispEdges">
              <path d="M0 5.500h12" />
            </svg>
          </button>
          <button aria-label="이전 크기로 복원" className="flex h-7 w-[58px] items-center justify-center">
            <svg viewBox="0 0 12 12" className="size-3" fill="none" stroke="#000" shapeRendering="crispEdges">
              <path d="M.5 2.500h9v9h-9zM2.500 2.500v-2h9v9h-2" />
            </svg>
          </button>
          <button aria-label="닫기" className="mr-0.5 flex h-7 w-[60px] items-center justify-center">
            <svg viewBox="0 0 12 12" className="size-3" stroke="#000">
              <path d="m0 0 12 12M12 0 0 12" />
            </svg>
          </button>
        </div>
      </div>
      <nav className="flex h-6 items-center gap-3.5 pl-[7px] text-[16px]">
        {menus.map((m) => (
          <button key={m}>{m}</button>
        ))}
      </nav>
    </header>
  );
}

function StatusBar() {
  return (
    <footer className="flex h-[30px] shrink-0 items-center bg-[#f1f1f1] pt-0.5 text-[17px]">
      <div className="flex items-center gap-[17px] pl-1.5">
        <button aria-label="지리적 위치">
          <svg viewBox="0 0 18 18" className="size-[18px]" fill="none">
            <circle cx="9" cy="9" r="8" stroke="#999" strokeWidth="1.200" />
            <path d="M9 15 5.800 7.500a3.300 3.300 0 1 1 6.400 0z" fill="#8e8e8e" />
          </svg>
        </button>
        <button aria-label="크레딧">
          <svg viewBox="0 0 18 18" className="size-[18px]" fill="none">
            <circle cx="9" cy="9" r="8" stroke="#000" strokeWidth="1.600" />
            <circle cx="9" cy="4.500" r="1.400" fill="#000" />
            <path d="M6.500 6.500h5v3.500h-1v4h-3v-4h-1z" fill="#000" />
          </svg>
        </button>
        <button aria-label="로그인">
          <svg viewBox="0 0 18 18" className="size-[18px]" fill="none">
            <circle cx="9" cy="9" r="8" stroke="#999" strokeWidth="1.400" />
            <circle cx="9" cy="6.500" r="3.300" fill="#999" />
            <path d="M3.500 14c0-4 2-4 5.500-4s5.500 0 5.500 4c-3 3.500-8 3.500-11 0z" fill="#999" />
          </svg>
        </button>
      </div>
      <div className="mr-[11px] ml-3 h-3.5 w-px bg-[#8a8a8a]" />
      <p className="flex-1">첫 번째 모서리를 선택하십시오.</p>
      <div className="mr-2.5 h-3.5 w-px bg-[#8a8a8a]" />
      <label htmlFor="measure" className="mr-2">
        치수
      </label>
      <input
        id="measure"
        defaultValue="1274mm, 746mm"
        className="mr-[5px] h-7 w-[250px] border border-b-0 border-[#a9b6c8] bg-white px-[3px] text-[15px] outline-none"
      />
    </footer>
  );
}

export default function App() {
  return (
    <div className="flex h-screen flex-col bg-black py-[26px] text-[#111] leading-5" style={{ fontFamily: "'Noto Sans', 'Noto Sans CJK KR', sans-serif" }}>
      <TitleBar />
      <TopToolbar />
      <div className="flex min-h-0 flex-1 bg-[#f1f1f1]">
        <LeftToolbar />
        <Viewport />
        <Tray />
      </div>
      <StatusBar />
    </div>
  );
}
